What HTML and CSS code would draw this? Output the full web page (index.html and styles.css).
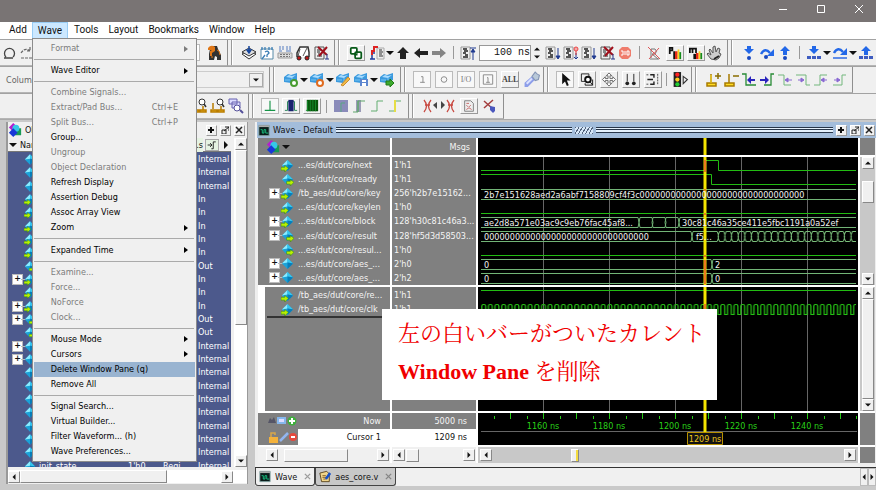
FILE: index.html
```html
<!DOCTYPE html>
<html lang="ja">
<head>
<meta charset="utf-8">
<title>Wave - Default</title>
<link rel="stylesheet" href="styles.css">
</head>
<body>
<svg class="defs" aria-hidden="true">
  <symbol id="undo" viewBox="0 0 16 16"><path d="M3 13h9M5 12a5 5 0 1 1 7 0" fill="none" stroke="#444" stroke-width="1.3"/></symbol>
  <symbol id="redo" viewBox="0 0 16 16"><path d="M2 8q4-6 9-2M11 2v4H7M2 13h11" fill="none" stroke="#666" stroke-width="1.2" stroke-dasharray="3 1"/></symbol>
  <symbol id="binoc" viewBox="0 0 16 16"><path d="M3 4l2-3h5l1 3 3 6v5h-4v-3l-2-1-1 4H2V9z" fill="#333"/><path d="M1 3q3-4 7-1v4L5 8v3H3V6l2-1H1z" fill="#e07818"/><path d="M10 5l2 1 1 4M4 12h2" stroke="#e07818" fill="none"/></symbol>
  <symbol id="stack" viewBox="0 0 16 16"><path d="M1 9l7-4 7 4-7 5z" fill="#fff" stroke="#333"/><path d="M1 7l7-4 7 4-7 4z" fill="#ddd" stroke="#333"/><path d="M8 1v5M6 5l2 3 2-3z" stroke="#17479e" fill="#17479e" stroke-width="1.5"/></symbol>
  <symbol id="docq" viewBox="0 0 16 16"><path d="M2 4h12v10H2z" fill="#fff" stroke="#568aa8"/><path d="M3 2v3M6 2v3M10 2v3M13 2v3M6 7q3-2 4 1l-2 2v2M3 14l3-4" fill="none" stroke="#3c7fb5" stroke-width="1.3"/></symbol>
  <symbol id="keys" viewBox="0 0 16 16"><path d="M1 8h14v5H1z" fill="#ddd" stroke="#999"/><path d="M3 9.500h10M3 11.500h10" stroke="#777" stroke-dasharray="2 1"/><path d="M3 1v4M6 1v4M10 1v4M13 1v4M2 6h3M9 6h5" stroke="#557dc0"/></symbol>
  <symbol id="car" viewBox="0 0 16 16"><path d="M2 12V8l3-6h8l1 5v5" fill="#fff" stroke="#333" stroke-width="1.5"/><path d="M5 4L3 11M12 3L8 11" stroke="#555"/><circle cx="4" cy="13" r="2" fill="#c01818" stroke="#222"/><circle cx="12" cy="13" r="2" fill="#c01818" stroke="#222"/></symbol>
  <symbol id="docx" viewBox="0 0 16 16"><path d="M2 2h9v12H2z" fill="#eee" stroke="#555"/><path d="M4 5h5M4 7h3M5 9h4M4 11h5" stroke="#222"/><path d="M5 2l9 8M14 2L6 11" stroke="#a0101c" stroke-width="2"/><path d="M14 9v5M12 14h4" stroke="#223388"/></symbol>
  <symbol id="doc" viewBox="0 0 16 16"><path d="M1 2h9v12H1z" fill="#eee" stroke="#999"/><path d="M3 4h4M4 6h4M3 8h3M5 10h3M3 12h5" stroke="#222" stroke-width="1.3"/></symbol>
  <symbol id="docup" viewBox="0 0 16 16"><use href="#doc"/><path d="M13 6v9M11 7l2-3 2 3zM10 3h6" fill="#203a90" stroke="#203a90"/></symbol>
  <symbol id="docdown" viewBox="0 0 16 16"><use href="#doc"/><path d="M13 3v10M11 11h4l-2 3z" fill="#203a90" stroke="#203a90"/></symbol>
  <symbol id="docred" viewBox="0 0 16 16"><use href="#doc"/><path d="M13 8v6M11 12l2 2 2-2" fill="none" stroke="#203a90"/><circle cx="13" cy="4" r="2" fill="#eaa" stroke="#e44"/><path d="M13 6v4" stroke="#d33"/></symbol>
  <symbol id="restart" viewBox="0 0 16 16"><path d="M8 3h7v11H8z" fill="#eee" stroke="#aaa"/><path d="M10 5h3M10 7h4M10 9h3M10 11h4" stroke="#333"/><path d="M3 9v5M1 14h5M3 8h3" stroke="#213a9a" stroke-width="1.5" fill="none"/><path d="M9 2H5v4H3v4" fill="none" stroke="#d22" stroke-width="2"/></symbol>
  <symbol id="rings" viewBox="0 0 16 16"><rect x="2" y="2" width="7" height="7" rx="1" fill="#fff" stroke="#075a18" stroke-width="2"/><rect x="7" y="7" width="7" height="7" rx="1" fill="#fff" stroke="#075a18" stroke-width="2"/><path d="M9 6v4H6" fill="none" stroke="#075a18" stroke-width="1.5"/></symbol>
  <symbol id="up" viewBox="0 0 16 16"><path d="M8 2l6 6h-3v6H5V8H2z" fill="#222"/></symbol>
  <symbol id="left" viewBox="0 0 16 16"><path d="M1 8l6-5v3h8v4H7v3z" fill="#222"/></symbol>
  <symbol id="right" viewBox="0 0 16 16"><path d="M15 8L9 3v3H1v4h8v3z" fill="#858585"/></symbol>
  <symbol id="stop" viewBox="0 0 16 16"><path d="M5 2h6l3 3v6l-3 3H5l-3-3V5z" fill="#ef7c6c"/><path d="M4 6h2v4H4M8 6v4M10 6h2v4h-2z" stroke="#fff" fill="none"/></symbol>
  <symbol id="nocover" viewBox="0 0 16 16"><path d="M5 13V4h4q3 2 0 5H6l6 5M4 14h9" fill="none" stroke="#777"/><path d="M2 2l12 12M13 3L3 14" stroke="#d55"/></symbol>
  <symbol id="perf" viewBox="0 0 16 16"><path d="M2 9V2h3v3H2" fill="none" stroke="#111" stroke-width="2"/><path d="M6 6h2v9H6z" fill="#111"/><path d="M8 6h3v9H8z" fill="#e4281a"/><path d="M11 4h2v11h-2z" fill="#ffd21c"/><path d="M13 7h2v8h-2z" fill="#158c1a"/></symbol>
  <symbol id="mem" viewBox="0 0 16 16"><path d="M1 8V3h7v5M4 3v5" fill="none" stroke="#111" stroke-width="2"/><path d="M5 9h3v6H5z" fill="#111"/><path d="M8 8h3v7H8z" fill="#e4281a"/><path d="M11 6h2v9h-2z" fill="#ffd21c"/><path d="M13 8h2v7h-2z" fill="#158c1a"/></symbol>
  <symbol id="hand" viewBox="0 0 16 16"><path d="M5 14L1 9l1-1 3 2-2-5 1-1 3 4V2l2-1 1 6 2-4 2 1-1 4 2 1-2 4-3 2z" fill="#ccc" stroke="#555"/><path d="M8 14l5-3" stroke="#222" stroke-width="2"/></symbol>
  <symbol id="into" viewBox="0 0 16 16"><path d="M6 1h4v3h3L8 9 3 4h3z" fill="#2368e8"/><circle cx="8" cy="13" r="2" fill="#1848c0"/></symbol>
  <symbol id="over" viewBox="0 0 16 16"><path d="M2 9q4-7 9-1" fill="none" stroke="#2368e8" stroke-width="2.5"/><path d="M15 4v7H8z" fill="#2368e8"/><circle cx="7" cy="12" r="2" fill="#1848c0"/></symbol>
  <symbol id="out" viewBox="0 0 16 16"><path d="M3 6l5-5 5 5h-3v4H6V6z" fill="#2368e8"/><circle cx="8" cy="13" r="2" fill="#1848c0"/></symbol>
  <symbol id="intos" viewBox="0 0 16 16"><path d="M6 1h4v3h3L8 9 3 4h3z" fill="#2368e8"/><path d="M1 12.500h14" stroke="#3e5cc0" stroke-width="3" stroke-dasharray="4 1"/></symbol>
  <symbol id="overs" viewBox="0 0 16 16"><path d="M2 8q4-7 9-1" fill="none" stroke="#2368e8" stroke-width="2.5"/><path d="M15 3v7H8z" fill="#2368e8"/><path d="M1 13h14" stroke="#5e8ce8" stroke-width="2"/></symbol>
  <symbol id="outs" viewBox="0 0 16 16"><path d="M3 6l5-5 5 5h-3v4H6V6z" fill="#2368e8"/><path d="M1 12.500h14" stroke="#3e5cc0" stroke-width="3" stroke-dasharray="4 1"/></symbol>
  <symbol id="tag" viewBox="0 0 16 16"><path d="M1 5l4-3 3 1 6-2v7l-6 3-7-1z" fill="#3b9ade"/><path d="M3 5l3-2 3 1 4-1-4 3z" fill="#a8dcff"/><path d="M2 8h5M9 6v4" stroke="#79c5f2"/></symbol>
  <symbol id="tagadd" viewBox="0 0 16 16"><use href="#tag"/><circle cx="11" cy="11" r="3" fill="#fff" stroke="#499c31" stroke-width="2"/></symbol>
  <symbol id="tagdel" viewBox="0 0 16 16"><use href="#tag"/><circle cx="11" cy="11" r="3" fill="#fff" stroke="#e06c20" stroke-width="2"/></symbol>
  <symbol id="tagedit" viewBox="0 0 16 16"><use href="#tag"/><path d="M6 13l7-8 2 2-7 7z" fill="#f1ba48" stroke="#cb8d2d"/></symbol>
  <symbol id="tagsave" viewBox="0 0 16 16"><use href="#tag"/><path d="M7 7h8v7H7z" fill="#5c85cf"/><path d="M9 8h4v2H9zM9 11h4v3H9z" fill="#fff"/></symbol>
  <symbol id="taggo" viewBox="0 0 16 16"><use href="#tag"/><path d="M7 9h4V7l4 4-4 4v-2H7z" fill="#3ea82c" stroke="#217a18"/></symbol>
  <symbol id="ones" viewBox="0 0 16 16"><path d="M7 5h2v6M6 11h5" fill="none" stroke="#888"/></symbol>
  <symbol id="zero" viewBox="0 0 16 16"><circle cx="8" cy="8" r="3" fill="none" stroke="#888"/></symbol>
  <symbol id="box1" viewBox="0 0 16 16"><path d="M3 3h10v10H3zM7 6h1v5M6 11h4" fill="none" stroke="#888"/></symbol>
  <symbol id="wrench" viewBox="0 0 16 16"><path d="M1 11l7-6 3 3-7 7H1z" fill="#8c9de9"/><path d="M8 5l3-4 2 2 2 1-1 4-3 1z" fill="#b9c9d9" stroke="#8495b5"/><path d="M3 12l5-5" stroke="#dbe2ff" stroke-width="2"/></symbol>
  <symbol id="arrow" viewBox="0 0 16 16"><path d="M5 1v12l3-3 2 5 2-1-2-5h4z" fill="#111"/></symbol>
  <symbol id="zoombox" viewBox="0 0 16 16"><path d="M2 2h8v8H2z" fill="none" stroke="#222"/><circle cx="9" cy="8" r="3" fill="#fff" stroke="#111" stroke-width="2"/><path d="M11 10l3 4M6 12v2h8V8" stroke="#111" fill="none"/></symbol>
  <symbol id="pan" viewBox="0 0 16 16"><path d="M8 1L5 4h2v3H4V5L1 8l3 3V9h3v3H5l3 3 3-3H9V9h3v2l3-3-3-3v2H9V4h2z" fill="#fff" stroke="#666"/></symbol>
  <symbol id="twocur" viewBox="0 0 16 16"><path d="M4 2v8M11 2v8" stroke="#222"/><circle cx="4" cy="12" r="2" fill="#222"/><circle cx="11" cy="12" r="2" fill="#222"/></symbol>
  <symbol id="threec" viewBox="0 0 16 16"><path d="M5 3h4v3M2 8h6M5 13h4v-3" fill="none" stroke="#222" stroke-width="1.5"/><path d="M13 2v12M1 3h3M1 13h3" stroke="#444" stroke-dasharray="2 1"/></symbol>
  <symbol id="light" viewBox="0 0 16 16"><path d="M2 1h7v14H2z" fill="#222"/><circle cx="5.500" cy="3.500" r="2" fill="#f22"/><circle cx="5.500" cy="8" r="2" fill="#fc2"/><circle cx="5.500" cy="12.500" r="2" fill="#2c3"/><path d="M11 5l4 3-4 4z" fill="#eee" stroke="#333"/></symbol>
  <symbol id="curadd" viewBox="0 0 16 16"><path d="M6 2v9M2 11h9v3H2z" stroke="#a87b00" stroke-width="1.5" fill="#ffdc20"/><path d="M6 3v8" stroke="#ffdc20"/><path d="M10 4h6M13 1v6" stroke="#8a6d00" stroke-width="1.5"/></symbol>
  <symbol id="curdel" viewBox="0 0 16 16"><path d="M6 2v9M2 11h9v3H2z" stroke="#a87b00" stroke-width="1.5" fill="#ffdc20"/><path d="M10 4h6" stroke="#8a6d00" stroke-width="1.5"/></symbol>
  <symbol id="prev" viewBox="0 0 16 16"><path d="M1 2h4v11h10" fill="none" stroke="#288b36" stroke-width="1.3"/><path d="M6 8l4-4v3h4v2h-4v3z" fill="#2a24bd"/></symbol>
  <symbol id="next" viewBox="0 0 16 16"><path d="M15 2h-3v11H5" fill="none" stroke="#288b36" stroke-width="1.3"/><path d="M10 8L6 4v3H1v2h5v3z" fill="#2a24bd"/></symbol>
  <symbol id="fall" viewBox="0 0 16 16"><path d="M1 3h6v10h7" fill="none" stroke="#72b77c"/><path d="M8 8l3-2v4zM11 8h4" fill="#8968d2" stroke="#8968d2"/></symbol>
  <symbol id="fallr" viewBox="0 0 16 16"><path d="M1 3h10v10h4" fill="none" stroke="#72b77c"/><path d="M9 8L6 6v4zM6 8H3" fill="#8968d2" stroke="#8968d2"/></symbol>
  <symbol id="rise" viewBox="0 0 16 16"><path d="M1 13h6V3h7" fill="none" stroke="#72b77c"/><path d="M8 8l3-2v4zM11 8h3" fill="#8968d2" stroke="#8968d2"/></symbol>
  <symbol id="riser" viewBox="0 0 16 16"><path d="M2 13h9V3h4" fill="none" stroke="#72b77c"/><path d="M9 8L6 6v4zM6 8H3" fill="#8968d2" stroke="#8968d2"/></symbol>
  <symbol id="zcur" viewBox="0 0 16 16"><path d="M3 5v6M1 12h6v2H1zM11 8v4M8 12h6v2H8z" fill="#f5bf28" stroke="#b87c00" stroke-width="1.5"/><circle cx="10" cy="4" r="3" fill="#fff" stroke="#333"/><path d="M12 6l2 3" stroke="#333" stroke-width="1.5"/></symbol>
  <symbol id="zarea" viewBox="0 0 16 16"><path d="M1 1h8v5H1zM4 4h8v6H4z" fill="#dcdcff" stroke="#6862b0"/><circle cx="9" cy="10" r="3" fill="#fff" stroke="#54509a"/><path d="M12 12l3 3" stroke="#54509a" stroke-width="2"/></symbol>
  <symbol id="edge" viewBox="0 0 16 16"><path d="M8 2v11M2 13h12" stroke="#169447" stroke-width="1.3"/></symbol>
  <symbol id="dark" viewBox="0 0 16 16"><path d="M1 13h3V3h8v10h3" fill="none" stroke="#16794a"/><path d="M5 1h6v13H5z" fill="#18226e"/></symbol>
  <symbol id="dense" viewBox="0 0 16 16"><path d="M2 1h13v13H2z" fill="#075409"/><path d="M1 13h3M3 2v12M6 1v13M9 1v13M12 1v13" stroke="#16902e"/></symbol>
  <symbol id="dim" viewBox="0 0 16 16"><path d="M1 2h14v12H1z" fill="#8a8bba"/><path d="M8 14V5h4" fill="none" stroke="#58a783"/></symbol>
  <symbol id="dim2" viewBox="0 0 16 16"><path d="M5 2h5v12H5z" fill="#9b9bb7"/><path d="M2 14h5V3h7M7 3v11" fill="none" stroke="#60a76d"/></symbol>
  <symbol id="step" viewBox="0 0 16 16"><path d="M2 13h6V3h6" fill="none" stroke="#62ad70"/></symbol>
  <symbol id="step2" viewBox="0 0 16 16"><path d="M2 13h6V3h6" fill="none" stroke="#62ad70"/><path d="M8 2v12" stroke="#e6dd45" stroke-width="2"/></symbol>
  <symbol id="xl" viewBox="0 0 16 16"><path d="M2 2q5 6 0 12M9 2q-5 6 0 12M3 7h5" fill="none" stroke="#c84840" stroke-width="1.3"/><path d="M15 4v7l-4-4z" fill="#444"/></symbol>
  <symbol id="xr" viewBox="0 0 16 16"><path d="M7 2q5 6 0 12M14 2q-5 6 0 12M8 7h5" fill="none" stroke="#c84840" stroke-width="1.3"/><path d="M1 3v8l4-4z" fill="#444"/></symbol>
  <symbol id="docface" viewBox="0 0 16 16"><path d="M3 2h7l3 3v9H3z" fill="#eee" stroke="#777"/><path d="M5 7l2 2M10 7l-2 2M5 12l3-2 3 2M5 5h3" stroke="#c25b5b" fill="none"/></symbol>
  <symbol id="xblue" viewBox="0 0 16 16"><path d="M2 3l9 8M11 2L2 10" stroke="#a33d3d" stroke-width="1.5"/><path d="M8 8l5 1v4l-2 2-3-3z" fill="#4a57bd"/></symbol>
  <symbol id="gem" viewBox="0 0 14 14"><path d="M1 7l6-6 6 6-6 6z" fill="#1ba2d8"/><path d="M1 7l6-6v5z" fill="#8cecff"/><path d="M7 1l6 6-6-1z" fill="#35c5ee"/><path d="M13 7l-6 6V6z" fill="#087db8"/></symbol>
  <symbol id="gemin" viewBox="0 0 14 14"><use href="#gem"/><path d="M0 9h4V7l4 3-4 4v-2H0z" fill="#b8f000" stroke="#267c13" stroke-width=".5"/></symbol>
  <symbol id="gemout" viewBox="0 0 14 14"><use href="#gem"/><path d="M6 9h4V7l4 3-4 4v-2H6z" fill="#b8f000" stroke="#267c13" stroke-width=".5"/></symbol>
  <symbol id="shapes" viewBox="0 0 16 16"><path d="M7 6h8v8H7z" fill="#179b55"/><path d="M1 5l5-5 5 5-5 5z" fill="#b51ed0"/><circle cx="9" cy="6" r="4" fill="#36c7e8"/><path d="M1 11l5-5 5 5-5 5z" fill="#1838d8"/></symbol>
  <symbol id="wav" viewBox="0 0 14 14"><path d="M1 1h12v12H1z" fill="#091c1a" stroke="#8aa"/><path d="M1 1h12v2H1z" fill="#aaa"/><path d="M3 6h2v4h2V6h2v4h3" fill="none" stroke="#18d08a"/></symbol>
  <symbol id="plus" viewBox="0 0 8 8"><path d="M4 1v6M1 4h6" stroke="#111" stroke-width="2"/></symbol>
  <symbol id="dock" viewBox="0 0 8 8"><path d="M1 4h4v4H1zM4 1h4v4M8 1L3 5" fill="none" stroke="#222"/></symbol>
  <symbol id="close" viewBox="0 0 8 8"><path d="M1 1l6 6M7 1L1 7" stroke="#222" stroke-width="1.5"/></symbol>
  <symbol id="tl" viewBox="0 0 8 8"><path d="M6 0v8L2 4z" fill="#111"/></symbol>
  <symbol id="tr" viewBox="0 0 8 8"><path d="M2 0v8l4-4z" fill="#111"/></symbol>
  <symbol id="tu" viewBox="0 0 8 8"><path d="M0 6h8L4 2z" fill="#111"/></symbol>
  <symbol id="td" viewBox="0 0 8 8"><path d="M0 2h8L4 6z" fill="#111"/></symbol>
</svg>

<header class="titlebar">
  <button aria-label="Minimize"><svg viewBox="0 0 10 10"><path d="M1 5.500h8"/></svg></button>
  <button aria-label="Maximize"><svg viewBox="0 0 10 10"><path d="M1.500 1.500h7v7h-7z"/></svg></button>
  <button aria-label="Close"><svg viewBox="0 0 10 10"><path d="M1 1l8 8M9 1L1 9"/></svg></button>
</header>

<nav class="menubar">
  <button>Add</button>
  <div class="open">
    <button class="on">Wave</button>
    <div class="menu">
      <button disabled>Format<i></i></button><hr>
      <button>Wave Editor<i></i></button><hr>
      <button disabled>Combine Signals...</button>
      <button disabled>Extract/Pad Bus...<kbd>Ctrl+E</kbd></button>
      <button disabled>Split Bus...<kbd>Ctrl+P</kbd></button>
      <button>Group...</button>
      <button disabled>Ungroup</button>
      <button disabled>Object Declaration</button>
      <button>Refresh Display</button>
      <button>Assertion Debug</button>
      <button>Assoc Array View</button>
      <button>Zoom<i></i></button><hr>
      <button>Expanded Time<i></i></button><hr>
      <button disabled>Examine...</button>
      <button disabled>Force...</button>
      <button disabled>NoForce</button>
      <button disabled>Clock...</button><hr>
      <button>Mouse Mode<i></i></button>
      <button>Cursors<i></i></button>
      <button class="sel">Delete Window Pane (q)</button>
      <button>Remove All</button><hr>
      <button>Signal Search...</button>
      <button>Virtual Builder...</button>
      <button>Filter Waveform... (h)</button>
      <button>Wave Preferences...</button>
    </div>
  </div>
  <button>Tools</button><button>Layout</button><button>Bookmarks</button><button>Window</button><button>Help</button>
</nav>

<section class="toolbars">
  <div class="bar">
    <div class="grp g-edit"><svg><use href="#undo"/></svg><svg><use href="#redo"/></svg><span class="grow"></span><input class="find" aria-label="Find"><svg><use href="#binoc"/></svg></div>
    <div class="grp"><svg><use href="#stack"/></svg><svg><use href="#docq"/></svg><svg><use href="#keys"/></svg><svg><use href="#car"/></svg><svg><use href="#docx"/></svg></div>
    <div class="grp"><svg class="up"><use href="#rings"/></svg><svg class="sp"><use href="#restart"/></svg><b></b><svg><use href="#up"/></svg><svg><use href="#left"/></svg><svg><use href="#right"/></svg><u></u><svg><use href="#docup"/></svg><input class="run" aria-label="Run length" value="100 ns"><span class="spin"><svg><use href="#tu"/></svg><svg><use href="#td"/></svg></span><svg><use href="#docdown"/></svg><svg><use href="#docred"/></svg><svg><use href="#docdown"/></svg><svg><use href="#docx"/></svg><svg><use href="#stop"/></svg><u></u><svg><use href="#nocover"/></svg><svg class="up sp"><use href="#perf"/></svg><svg class="up sp"><use href="#mem"/></svg><svg><use href="#hand"/></svg></div>
    <div class="grp last"><svg><use href="#into"/></svg><svg><use href="#over"/></svg><svg><use href="#out"/></svg><u></u><svg><use href="#intos"/></svg><b></b><svg><use href="#overs"/></svg><b></b><svg><use href="#outs"/></svg></div>
  </div>
  <div class="bar">
    <div class="grp g-col"><label for="lay">ColumnLayout</label><select id="lay"><option></option></select><svg class="drop"><use href="#td"/></svg></div>
    <div class="grp"><svg><use href="#tagadd"/></svg><b></b><svg><use href="#tagdel"/></svg><b></b><svg><use href="#tagedit"/></svg><svg><use href="#tagsave"/></svg><b></b><svg><use href="#taggo"/></svg></div>
    <div class="grp wide"><svg class="dn"><use href="#ones"/></svg><svg class="dn"><use href="#zero"/></svg><span class="dn">I/O</span><svg class="dn"><use href="#box1"/></svg><span class="up">ALL</span><svg><use href="#wrench"/></svg></div>
    <div class="grp wide"><svg class="dn"><use href="#arrow"/></svg><svg class="up"><use href="#zoombox"/></svg><svg class="up"><use href="#pan"/></svg><svg class="up"><use href="#twocur"/></svg><svg class="up"><use href="#threec"/></svg><u></u><svg><use href="#light"/></svg></div>
    <div class="grp"><svg><use href="#curadd"/></svg><svg><use href="#curdel"/></svg><svg><use href="#prev"/></svg><svg><use href="#next"/></svg><svg><use href="#fall"/></svg><svg><use href="#fallr"/></svg><svg><use href="#rise"/></svg><svg><use href="#riser"/></svg></div>
  </div>
  <div class="bar">
    <div class="grp g-zoom"><svg><use href="#zcur"/></svg><svg><use href="#zcur"/></svg><svg><use href="#zarea"/></svg></div>
    <div class="grp"><svg class="dn"><use href="#edge"/></svg><svg class="up sp"><use href="#dark"/></svg><svg class="up sp"><use href="#dense"/></svg><u></u><svg><use href="#dim"/></svg><svg><use href="#dim2"/></svg><svg><use href="#step"/></svg><svg><use href="#step2"/></svg></div>
    <div class="grp"><svg><use href="#xl"/></svg><svg><use href="#xr"/></svg><svg class="up sp"><use href="#docface"/></svg><svg class="sp"><use href="#xblue"/></svg></div>
  </div>
</section>

<main>
  <section class="objects">
    <div class="ohead"><svg class="shp"><use href="#shapes"/></svg><span>Objects</span><span class="grow"></span><button aria-label="Zoom pane"><svg><use href="#plus"/></svg></button><button aria-label="Undock"><svg><use href="#dock"/></svg></button><button aria-label="Close pane"><svg><use href="#close"/></svg></button></div>
    <div class="obody">
      <div class="olist">
        <div class="ocols"><svg class="tri"><use href="#td"/></svg><span>Name</span><span class="grow"></span><span class="now">.s</span><svg class="stepi" viewBox="0 0 16 16"><path d="M1 8h6M5 5l3 3-3 3M7 14h3V3h4" fill="none" stroke="#222" stroke-width="1.500"/></svg><svg class="tri"><use href="#tr"/></svg></div>
        <div class="oclip"><div class="orows">
          <div><svg><use href="#gem"/></svg><em>Internal</em></div>
          <div><svg><use href="#gem"/></svg><em>Internal</em></div>
          <div><svg><use href="#gem"/></svg><em>Internal</em></div>
          <div><svg><use href="#gemin"/></svg><em>In</em></div>
          <div><svg><use href="#gemin"/></svg><em>In</em></div>
          <div><svg><use href="#gemin"/></svg><em>In</em></div>
          <div><svg><use href="#gemin"/></svg><em>In</em></div>
          <div><svg><use href="#gemin"/></svg><em>In</em></div>
          <div><svg><use href="#gemout"/></svg><em>Out</em></div>
          <div class="x"><svg><use href="#gemin"/></svg><em>In</em></div>
          <div><svg><use href="#gemin"/></svg><em>In</em></div>
          <div class="x"><svg><use href="#gemin"/></svg><em>In</em></div>
          <div class="x"><svg><use href="#gemout"/></svg><em>Out</em></div>
          <div><svg><use href="#gemout"/></svg><em>Out</em></div>
          <div class="x"><svg><use href="#gem"/></svg><em>Internal</em></div>
          <div class="x"><svg><use href="#gem"/></svg><em>Internal</em></div>
          <div><svg><use href="#gem"/></svg><em>Internal</em></div>
          <div><svg><use href="#gem"/></svg><em>Internal</em></div>
          <div><svg><use href="#gem"/></svg><em>Internal</em></div>
          <div><svg><use href="#gem"/></svg><em>Internal</em></div>
          <div><svg><use href="#gem"/></svg><em>Internal</em></div>
          <div><svg><use href="#gem"/></svg><em>Internal</em></div>
          <div><svg><use href="#gem"/></svg><em>Internal</em></div>
          <div><svg><use href="#gem"/></svg><span class="on1">init_state</span><span class="on2">1'h0</span><span class="on3">Regi</span><em>Internal</em></div>
        </div></div>
      </div>
      <div class="vs ov"><svg><use href="#tu"/></svg><span class="thumb"></span><span class="grow"></span><svg><use href="#td"/></svg></div>
    </div>
    <div class="hs oh"><svg><use href="#tl"/></svg><span class="thumb"></span><span class="grow"></span><svg><use href="#tr"/></svg></div>
  </section>

  <section class="wave">
    <div class="whead"><svg class="wi"><use href="#wav"/></svg><span>Wave - Default</span><span class="lines"></span><span class="grip"></span><span class="lines"></span><button aria-label="Zoom pane"><svg><use href="#plus"/></svg></button><button aria-label="Undock"><svg><use href="#dock"/></svg></button><button aria-label="Close pane"><svg><use href="#close"/></svg></button></div>
    <div class="wgrid">
      <div class="c hd"><svg class="shp"><use href="#shapes"/></svg><b></b></div>
      <div class="c hd msgs">Msgs</div>
      <div class="c k"><svg class="plot"><path class="cur" d="M227 0v17"/></svg></div>
      <div class="c"></div>

      <div class="c names nine">
        <div><svg><use href="#gemin"/></svg>...es/dut/core/next</div>
        <div><svg><use href="#gemout"/></svg>...es/dut/core/ready</div>
        <div class="x"><svg><use href="#gemin"/></svg>/tb_aes/dut/core/key</div>
        <div><svg><use href="#gemin"/></svg>...es/dut/core/keylen</div>
        <div class="x"><svg><use href="#gemin"/></svg>...es/dut/core/block</div>
        <div class="x"><svg><use href="#gemout"/></svg>...es/dut/core/result</div>
        <div><svg><use href="#gemout"/></svg>...es/dut/core/resul...</div>
        <div class="x"><svg><use href="#gem"/></svg>...es/dut/core/aes_...</div>
        <div class="x"><svg><use href="#gem"/></svg>...es/dut/core/aes_...</div>
      </div>
      <div class="c vals nine"><div>1'h1</div><div>1'h1</div><div>256'h2b7e15162...</div><div>1'h0</div><div>128'h30c81c46a3...</div><div>128'hf5d3d58503...</div><div>1'h0</div><div>2'h0</div><div>2'h2</div></div>
      <div class="c k"><svg class="plot">
        <defs>
          <pattern id="clk" x="3" y="0" width="6.64" height="30" patternUnits="userSpaceOnUse"><path d="M0 27.500h.8V19q0-1.500 1.500-1.500h.8q1.500 0 1.500 1.500v8.500h2.200" fill="none" stroke="#25c414" stroke-width="1.2"/></pattern>
          <pattern id="xx" x="239" y="0" width="6.64" height="100" patternUnits="userSpaceOnUse"><path d="M0 74.500q3 5 0 10M2.600 74.500q-3 5 0 10M2.600 74.500h4M2.600 84.500h4" fill="none" stroke="#7bc07b"/></pattern>
        </defs>
        <path class="grid" d="M65.500 0v128M131.500 0v128M197.500 0v128M263.500 0v128M329.500 0v128"/>
        <path class="sig" d="M3 13.500H227.500V3.500H240.500V13.500H378M3 17.500H233.500V27.500H378M3 56.500H378M3 98.500H378"/>
        <path class="bus" d="M3 32.500H378M3 42.500H378M3 60.500H160q2 5 0 10H3M162 60.500h12q2 5 0 10h-12q-2-5 0-10M175 60.500h12q2 5 0 10h-12q-2-5 0-10M188 60.500h12q2 5 0 10h-12q-2-5 0-10M378 60.500H202q-2 5 0 10H378M3 74.500H213q2 5 0 10H3M239 74.500H215q-2 5 0 10H239M3 102.500H233q2 5 0 10H3M378 102.500H235q-2 5 0 10H378M3 116.500H226q2 5 0 10H3M228 116.500h5q2 5 0 10h-5q-2-5 0-10M378 116.500H235q-2 5 0 10H378"/>
        <path d="M239 73h139v13H239z" fill="url(#xx)"/>
        <path class="cur" d="M227 0v128"/><path class="hit" d="M227 3v12M227 32v2M227 56v2M227 98v2M227 103v24"/>
        <g class="wt"><text x="6" y="41">2b7e151628aed2a6abf7158809cf4f3c00000000000000000000000000000000</text><text x="6" y="69">ae2d8a571e03ac9c9eb76fac45af8...</text><text x="204" y="69">30c81c46a35ce411e5fbc1191a0a52ef</text><text x="6" y="83">00000000000000000000000000000000</text><text x="218" y="83">f5...</text><text x="6" y="111">0</text><text x="237" y="111">2</text><text x="6" y="125">0</text><text x="237" y="125">0</text></g>
      </svg></div>
      <div class="c vs"><svg><use href="#tu"/></svg><span class="sgap"></span><span class="thumb small"></span><span class="grow"></span><svg><use href="#td"/></svg></div>

      <div class="c names cur2"><div><svg><use href="#gemin"/></svg>/tb_aes/dut/core/re...</div><div><svg><use href="#gemin"/></svg>/tb_aes/dut/core/clk</div><p class="ins"></p></div>
      <div class="c vals two"><div>1'h1</div><div>1'h1</div></div>
      <div class="c k"><svg class="plot">
        <path class="grid" d="M65.500 0v900M131.500 0v900M197.500 0v900M263.500 0v900M329.500 0v900"/>
        <path class="sig" d="M3 3.500H378"/><path d="M3 15h375v14H3z" fill="url(#clk)"/>
        <path class="cur" d="M227 0v900"/><path class="hit" d="M227 17v12"/>
      </svg></div>
      <div class="c vs"><svg><use href="#tu"/></svg><span class="thumb full"></span><svg><use href="#td"/></svg></div>

      <div class="c foot"><div class="f1"><svg viewBox="0 0 30 12"><path d="M1 8l2-5 2 2 2-3 2 6z" fill="#556"/><path d="M10 2h9v7h-9z" fill="#86b7ed"/><path d="M12 4h5v3h-5z" fill="#ddf"/><circle cx="25" cy="6" r="4.500" fill="#3faf3c"/><path d="M25 3v6M22 6h6" stroke="#fff" stroke-width="2"/></svg><span>Now</span></div><div class="f2"><svg viewBox="0 0 30 12"><path d="M2 6h9v6H2z" fill="#f4b23b"/><path d="M4 6V2h4v2" fill="none" stroke="#d9a648" stroke-width="1.500"/><path d="M13 10l5-5 3-3" stroke="#92b5ef" stroke-width="2.500"/><circle cx="26" cy="6" r="4" fill="#e4483c"/><path d="M24 6h4" stroke="#fff" stroke-width="2"/></svg><span>Cursor 1</span></div></div>
      <div class="c foot"><div class="f1"><span>5000 ns</span></div><div class="f2"><span>1209 ns</span></div></div>
      <div class="c k"><svg class="plot">
        <path class="tick" d="M16.500 3v3M32.500 0v6M49.500 3v3M65.500 0v6M82.500 3v3M98.500 0v6M115.500 3v3M131.500 0v6M148.500 3v3M164.500 0v6M181.500 3v3M197.500 0v6M214.500 3v3M230.500 0v6M247.500 3v3M263.500 0v6M280.500 3v3M296.500 0v6M313.500 3v3M329.500 0v6M346.500 3v3M362.500 0v6M378.500 3v3"/>
        <path class="grid" d="M3 18.500h376"/>
        <g class="tt"><text x="65" y="16">1160 ns</text><text x="131" y="16">1180 ns</text><text x="197" y="16">1200 ns</text><text x="263" y="16">1220 ns</text><text x="329" y="16">1240 ns</text></g>
        <path class="cur" d="M227 0v19"/><path class="lab" d="M209.500 19.500h35v12h-35z"/><text class="lt" x="227" y="29">1209 ns</text>
      </svg></div>
      <div class="c"></div>

      <div class="c hs h1"><svg><use href="#tl"/></svg><span class="thumb"></span><span class="grow"></span><svg><use href="#tr"/></svg></div>
      <div class="c hs h2"><svg><use href="#tl"/></svg><span class="thumb"></span><span class="grow"></span><svg><use href="#tr"/></svg></div>
      <div class="c hs h3"><svg><use href="#tl"/></svg><span class="thumb"></span><span class="grow"></span><svg><use href="#tr"/></svg></div>
      <div class="c"></div>
    </div>
    <div class="tabs">
      <button class="tab on"><svg><use href="#wav"/></svg>Wave<svg class="tx"><use href="#close"/></svg></button>
      <button class="tab"><svg viewBox="0 0 14 14"><path d="M1 3l8-2 3 3v9H3z" fill="#f0d58b" stroke="#4f3b16"/><path d="M4 6h4M4 8h5M5 10h3" stroke="#7a5520"/><path d="M8 10l5-7" stroke="#1550c8" stroke-width="3"/></svg>aes_core.v<svg class="tx"><use href="#close"/></svg></button>
      <span class="grow"></span>
      <button class="ar" aria-label="Scroll tabs left"><svg><use href="#tl"/></svg></button><button class="ar" aria-label="Scroll tabs right"><svg><use href="#tr"/></svg></button>
    </div>
  </section>
</main>

<aside class="note">左の白いバーがついたカレント<br><strong>Window Pane</strong> を削除</aside>
</body>
</html>
```
FILE: styles.css
```css
* { box-sizing: border-box; }
body { margin: 0; min-height: 100vh; display: flex; flex-direction: column; background: #c9c9c9; color: #111; font: 9px/14px "DejaVu Sans Condensed", "DejaVu Sans", sans-serif; position: relative; overflow-x: hidden; }
button, input, select { font: inherit; color: inherit; border: 0; padding: 0; margin: 0; background: none; border-radius: 0; }
svg { flex: none; display: block; }
.defs { position: absolute; width: 0; height: 0; }
.grow { flex: 1; }

.titlebar { height: 22px; background: #797474; display: flex; justify-content: flex-end; align-items: center; padding: 0 11px 4px 0; gap: 26px; }
.titlebar button { width: 12px; height: 10px; display: flex; justify-content: center; }
.titlebar svg { width: 10px; height: 10px; fill: none; stroke: #fff; }

.menubar { height: 17px; background: #fff; display: flex; font: 10px/16px Roboto, "Noto Sans", sans-serif; padding-left: 4px; color: #111; }
.menubar > button { padding: 0 5px; height: 16px; white-space: nowrap; }
.open { position: relative; margin-right: 1px; }
.menubar .on { height: 16px; background: #cce8ff; border: 1px solid #99cdf5; border-bottom: 0; padding: 0 5px; line-height: 15px; min-width: 36px; }
.menu { position: absolute; z-index: 5; top: 16px; left: 0; width: 165px; height: 424px; background: #f0f0f0; border: 1px solid #8c8c8c; padding: 2px 1px; display: flex; flex-direction: column; font: 9px/15px "DejaVu Sans Condensed", "DejaVu Sans", sans-serif; color: #000; }
.menu button { height: 15px; flex: none; display: flex; align-items: center; padding: 0 7px 0 17px; text-align: left; white-space: nowrap; }
.menu button:disabled { color: #7c7c7c; }
.menu .sel { background: #99b4d1; }
.menu kbd { font: inherit; margin-left: auto; width: 36px; }
.menu i { margin-left: auto; border: 3px solid transparent; border-left: 4px solid currentColor; border-right: 0; }
.menu hr { flex: 1; width: 160px; margin: 0; border: 0; background: linear-gradient(#aaa, #aaa) 0 3px / 100% 1px no-repeat; }

.toolbars { background: #f0f0f0; }
.bar { height: 27px; display: flex; border-top: 1px solid #a2a2a2; }
.bar:last-child { height: 26px; }
.grp { display: flex; align-items: center; border-right: 1px solid #8f8f8f; border-bottom: 1px solid #b5b5b5; padding: 0 4px 0 12px; position: relative; box-shadow: inset 3px 0 #f0f0f0, inset 4px 0 #999, inset 5px 0 #fff; }
.grp.last { flex: 1; border-right: 0; padding-left: 12px; }
.grp > svg { width: 18px; height: 16px; }
.grp > b, .hd > b { width: 8px; height: 4px; border: 4px solid transparent; border-top-color: #111; border-bottom: 0; background-clip: padding-box; }
.grp > u { width: 1px; height: 13px; background: #999; margin: 0 5px; }
.up { border-right: 1px solid #999; border-bottom: 1px solid #999; border-top: 1px solid #fff; border-left: 1px solid #fff; }
.dn { border: 1px solid #bbb; background: #f8f8f8; }
.grp > .sp { margin-left: 3px; }
.wide > svg, .wide > span { width: 18px; height: 17px; margin-right: 4px; }
.wide > span { font: 8px/15px "Liberation Serif", serif; text-align: center; color: #777; }
.wide > span.up { font-weight: bold; color: #444; }
.grp.wide { padding: 0 2px 0 12px; }
.wide > :last-child { margin-right: 0; }
.grp.wide > u { margin: 0 4px 0 0; }
.g-edit { width: 229px; padding: 0 3px 0 0; box-shadow: none; }
.grp .find { width: 164px; height: 17px; background: #fff; border: 1px solid #bbb; margin-right: 6px; }
.grp .run { width: 52px; height: 16px; background: #fff; border: 1px solid #999; font: 10px/14px "Liberation Mono", monospace; text-align: right; margin-left: 2px; }
.spin { width: 12px; padding-left: 2px; margin-right: 1px; display: flex; flex-direction: column; gap: 2px; }
.spin svg { width: 8px; height: 6px; }
.g-col { width: 270px; padding: 0 6px; box-shadow: none; color: #666; }
.g-col select { flex: 1; height: 17px; border: 1px solid #ccc; appearance: none; min-width: 0; }
.g-col .drop { width: 14px; height: 14px; padding: 3px; border: 1px solid #aaa; margin-left: -15px; }
.g-zoom { width: 249px; justify-content: flex-end; padding: 0 3px 0 0; box-shadow: none; }

main { flex: 1; display: flex; padding: 2px 0 4px; border-top: 1px solid #aaa; min-height: 370px; }
.objects { width: 242px; margin: 0 7px 2px 6px; background: #f0f0f0; border: 1px solid #999; border-width: 0 1px 0 2px; display: flex; flex-direction: column; flex: none; }
.ohead { height: 16px; display: flex; align-items: center; gap: 3px; padding-right: 2px; }
.shp { width: 14px; height: 14px; }
.ohead button, .whead button { width: 11px; height: 11px; border: 1px solid #999; border-top-color: #fff; border-left-color: #fff; background: #f0f0f0; flex: none; }
.ohead button svg, .whead button svg { width: 8px; height: 8px; }
.obody { flex: 1; display: flex; min-height: 0; }
.olist { flex: 1; display: flex; flex-direction: column; margin-right: 3px; }
.ocols { height: 14px; display: flex; align-items: center; gap: 2px; border-bottom: 1px solid #777; background: #f0f0f0; }
.tri { width: 8px; height: 8px; margin: 0 1px; }
.ocols .now { background: #e5f2e2; }
.stepi { width: 14px; height: 12px; border: 1px solid #aaa; background: #e5f2e2; }
.oclip { flex: 1; background: #4c598c; overflow: hidden; position: relative; min-height: 300px; }
.orows { position: absolute; inset: 1px 0 auto 0; height: 320px; display: grid; grid-template-rows: repeat(24, 1fr); color: #fff; }
.orows div { display: flex; align-items: center; padding-left: 16px; position: relative; line-height: 13px; }
.orows svg { width: 12px; height: 13px; }
.orows em { font-style: normal; margin-left: auto; width: 34px; padding-left: 1px; white-space: nowrap; }
.x::before { content: "+"; position: absolute; left: 4px; width: 9px; height: 9px; background: #fff; color: #111; font: bold 8px/7px "DejaVu Sans", sans-serif; text-align: center; border: 1px solid #bbb; }
.x::after { content: ""; position: absolute; left: 13px; width: 4px; height: 1px; background: #bbb; }
.on1 { width: 92px; padding-left: 3px; } .on2 { width: 35px; } .on3 { width: 24px; }
.vs { display: flex; flex-direction: column; align-items: center; }
.vs svg, .hs svg { width: 12px; height: 12px; padding: 2px; background: #f0f0f0; border: 1px solid #888; border-top-color: #fff; border-left-color: #fff; }
.thumb { background: #f0f0f0; border: 1px solid #888; border-top-color: #fff; border-left-color: #fff; flex: none; }
.vs .thumb { width: 12px; }
.ov { width: 13px; background: #fff; }
.ov .thumb { height: 175px; }
.hs { display: flex; align-items: center; }
.hs .thumb { height: 13px; }
.oh { height: 13px; margin: 3px 0 1px; background: #fff; padding-right: 14px; }
.oh .thumb { width: 147px; }

.wave { flex: 1; min-width: 0; display: flex; flex-direction: column; background: #f0f0f0; }
.whead { height: 16px; display: flex; align-items: center; background: #a3bddb; padding: 0 1px 0 1px; gap: 3px; margin-left: 2px; }
.whead span { white-space: nowrap; }
.wi { width: 12px; height: 13px; }
.lines { flex: 1; height: 6px; border: 1px solid #27364a; border-width: 1px 0; background: linear-gradient(#e4f1fd 0 1px, #27364a 1px 2px, #e4f1fd 2px); }
.grip { width: 18px; height: 7px; background: repeating-linear-gradient(120deg, #52637d 0 1px, #d5e6f7 1px 3px); }
.wgrid { flex: 1; display: grid; grid-template: 17px 128px minmax(60px, 1fr) 32px 16px / 132px 84px minmax(0, 1fr) 15px; gap: 2px; background: #fff; border: 1px solid #eee; border-width: 0 1px 2px 3px; }
.c { background: #808080; color: #f4f4f4; min-width: 0; overflow: hidden; position: relative; }
.c.k { background: #000; }
.hd { display: flex; align-items: center; padding-left: 8px; }
.hd .shp { margin-right: 2px; }
.msgs { justify-content: flex-end; padding-right: 6px; }
.nine { display: grid; grid-template-rows: repeat(9, 1fr); padding-top: 1px; }
.names div { display: flex; align-items: center; padding-left: 23px; position: relative; white-space: nowrap; }
.names svg { width: 13px; height: 13px; margin-right: 4px; }
.names .x::before { left: 11px; }
.names .x::after { left: 20px; }
.names.cur2 { border-left: 7px solid #fff; padding-top: 1px; }
.cur2 div, .two div { height: 14px; }
.cur2 div { padding-left: 16px; }
.ins { margin: 0 0 0 2px; height: 2px; background: #333; }
.vals { padding-left: 2px; white-space: nowrap; }
.two { padding-top: 1px; }
.plot { width: 100%; height: 100%; position: absolute; inset: 0; }
.grid { stroke: #666; fill: none; }
.sig { stroke: #22bc12; fill: none; }
.bus { stroke: #72b476; fill: none; }
.cur { stroke: #f4e400; stroke-width: 3; }
.hit { stroke: #ee7a1c; stroke-width: 2; }
.tick { stroke: #28c818; }
.plot text { font: 9px "DejaVu Sans Condensed", "DejaVu Sans", sans-serif; }
.wt { fill: #f2f2f2; }
.tt { fill: #28d018; text-anchor: middle; }
.lab { fill: #111; stroke: #b89200; }
.lt { fill: #ecc61c; text-anchor: middle; }
.wgrid .vs { background: #c8c8c8; }
.sgap { height: 12px; }
.small { height: 22px; }
.full { flex: 1; }
.foot { display: flex; flex-direction: column; }
.foot div { flex: 1; display: flex; align-items: center; justify-content: space-between; }
.foot svg { width: 32px; height: 12px; margin-left: 8px; }
.foot span { margin-left: auto; padding-right: 9px; }
.f2 span { background: #fff; color: #111; flex: 1; text-align: right; align-self: stretch; line-height: 16px; }
.foot .f2 svg + span { margin-left: 0; }
.c.hs { background: #f0f0f0; padding: 0 1px; }
.h1 svg:first-child { margin-left: 7px; margin-right: 6px; }
.h1 .thumb { width: 64px; } .h2 .thumb { width: 13px; margin-left: 1px; }
.c.h3 { background: #c8c8c8; padding: 0 2px; }
.h3 .thumb { width: 8px; margin-left: 21%; background: linear-gradient(90deg, #f0f0f0 4px, #f4dc40 4px 6px, #eee 6px); }
.tabs { height: 19px; display: flex; margin-top: 2px; border-top: 1px solid #333; }
.tab { display: flex; align-items: center; gap: 4px; border: 1px solid #444; border-top: 0; padding: 0 3px; background: #c8c8c8; border-radius: 0 0 3px 3px; white-space: nowrap; }
.tab svg { width: 12px; height: 13px; }
.tab.on { background: #f0f0f0; }
.tab .tx { width: 7px; height: 7px; margin-left: 3px; opacity: .4; }
.ar { width: 8px; border: 1px solid #bbb; }
.ar svg { width: 6px; height: 8px; }

.note { position: absolute; left: 382px; top: 309px; width: 335px; height: 91px; z-index: 4; padding: 6px 16px; background: #fff; color: #f00000; font: 22px/38px "Liberation Serif", "Noto Serif CJK JP", "Noto Sans CJK JP", serif; font-weight: normal; white-space: nowrap; }
```
